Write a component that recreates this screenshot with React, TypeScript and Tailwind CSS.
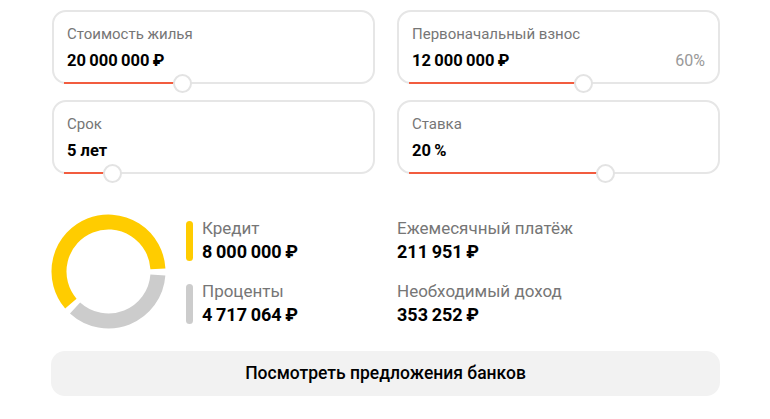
const TS = "\u2009"

interface FieldProps {
  label: string
  value: string
  thumb: number
  extra?: string
}

const Field = ({ label, value, thumb, extra }: FieldProps) => {
  return (
    <div className="relative h-[74px] rounded-[14px] border-2 border-[#e6e6e6] bg-white pl-[13px] pr-[13px] pt-[12px]">
      <div className="text-[15px] leading-[20px] text-[#767676]">{label}</div>
      <div className="mt-[6px] flex items-center justify-between">
        <span className="text-[16.5px] font-bold leading-[22px] text-black">{value}</span>
        {extra && <span className="text-[16px] leading-[22px] text-[#999]">{extra}</span>}
      </div>
      <div className="absolute bottom-[-2px] left-[10px] right-[10px] h-[2px]">
        <div className="h-[2px] bg-[#f25c3f]" style={{ width: thumb }} />
        <div
          className="absolute top-[-8px] h-[19px] w-[19px] rounded-full border-2 border-[#e3e3e3] bg-white"
          style={{ left: thumb - 9.5 }}
        />
      </div>
    </div>
  )
}

const pt = (a: number, r: number, c: number) => {
  const rad = (a * Math.PI) / 180
  return `${(c + r * Math.sin(rad)).toFixed(2)} ${(c - r * Math.cos(rad)).toFixed(2)}`
}

const arc = (start: number, end: number, r: number, c: number) => {
  const large = end - start > 180 ? 1 : 0
  return `M ${pt(start, r, c)} A ${r} ${r} 0 ${large} 1 ${pt(end, r, c)}`
}

const Donut = () => {
  return (
    <svg width="115" height="115" viewBox="0 0 115 115" className="shrink-0">
      <path d={arc(229.5, 447, 49.5, 57.5)} fill="none" stroke="#ffcc00" strokeWidth="15" />
      <path d={arc(94, 222.5, 49.5, 57.5)} fill="none" stroke="#cccccc" strokeWidth="15" />
    </svg>
  )
}

interface StatProps {
  label: string
  value: string
  bar?: string
}

const Stat = ({ label, value, bar }: StatProps) => {
  return (
    <div className="flex gap-[9px]">
      {bar && <div className={`mt-[5px] h-[40px] w-[7px] rounded-full ${bar}`} />}
      <div>
        <div className="text-[17px] leading-[24px] text-[#767676]">{label}</div>
        <div className="text-[18px] font-bold leading-[24px] text-black">{value}</div>
      </div>
    </div>
  )
}

export default function App() {
  return (
    <div
      className="min-h-[419px] w-[770px] bg-white pl-[51px] pr-[50px] pt-[10px]"
      style={{ fontFamily: "Roboto, 'Noto Sans', sans-serif" }}
    >
      <div className="grid grid-cols-2 gap-x-[22px] gap-y-[16px] pl-[1px]">
        <Field label="Стоимость жилья" value={`20${TS}000${TS}000${TS}₽`} thumb={118} />
        <Field label="Первоначальный взнос" value={`12${TS}000${TS}000${TS}₽`} thumb={174} extra="60%" />
        <Field label="Срок" value="5 лет" thumb={48} />
        <Field label="Ставка" value={`20${TS}%`} thumb={196} />
      </div>

      <div className="mt-[42px] grid grid-cols-2 gap-x-[22px] pl-[1px]">
        <div className="flex gap-[20px]">
          <div className="-ml-[1px] mt-[-2px]">
            <Donut />
          </div>
          <div className="flex flex-col gap-[15px]">
            <Stat label="Кредит" value={`8${TS}000${TS}000${TS}₽`} bar="bg-[#ffcc00]" />
            <Stat label="Проценты" value={`4${TS}717${TS}064${TS}₽`} bar="bg-[#cccccc]" />
          </div>
        </div>
        <div className="flex flex-col gap-[15px]">
          <Stat label="Ежемесячный платёж" value={`211${TS}951${TS}₽`} />
          <Stat label="Необходимый доход" value={`353${TS}252${TS}₽`} />
        </div>
      </div>

      <button className="mt-[22px] flex h-[45px] w-full items-center justify-center rounded-[14px] bg-[#f2f2f2] text-[17.5px] font-medium text-black">
        Посмотреть предложения банков
      </button>
    </div>
  )
}
